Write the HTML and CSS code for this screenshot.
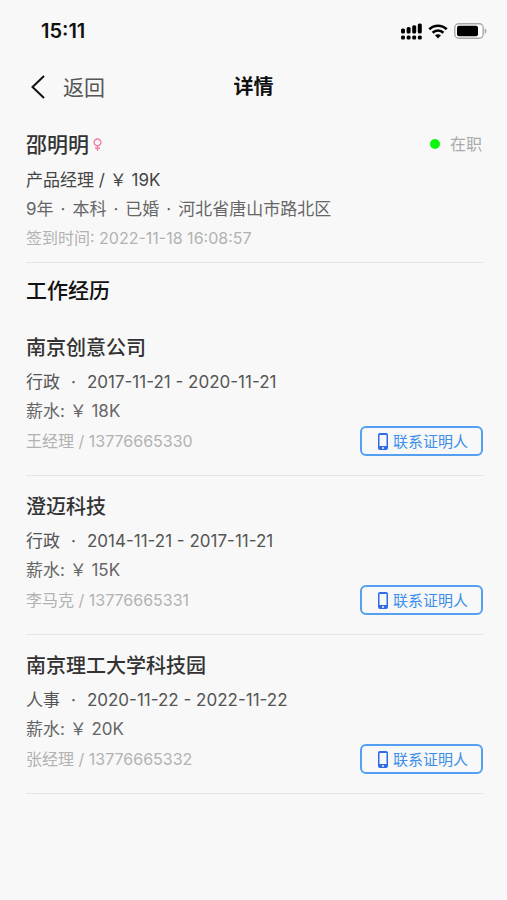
FILE: index.html
```html
<!DOCTYPE html>
<html lang="zh-CN">
<head>
<meta charset="utf-8">
<meta name="viewport" content="width=device-width, initial-scale=1">
<title>详情</title>
<link rel="stylesheet" href="styles.css">
</head>
<body>
<svg class="defs" aria-hidden="true">
  <symbol id="phone" viewBox="0 0 10 17">
    <path fill-rule="evenodd" d="M2 0h6a2 2 0 0 1 2 2v13a2 2 0 0 1-2 2H2a2 2 0 0 1-2-2V2a2 2 0 0 1 2-2zM1.500 2v11h7V2zM5 14a1 1 0 1 0 0 2a1 1 0 1 0 0-2z"/>
  </symbol>
</svg>
<div class="status-bar">
  <span class="clock">15:11</span>
  <div class="indicators">
    <svg width="21" height="17" viewBox="0 0 21 17" aria-hidden="true">
      <g fill="#000">
        <rect x="0" y="5.500" width="4" height="5" rx="1.500"/>
        <rect x="5.600" y="4" width="4" height="6.500" rx="1.500"/>
        <rect x="11.200" y="2.200" width="4" height="8.300" rx="1.500"/>
        <rect x="16.800" y="0.500" width="4" height="10" rx="1.500"/>
        <rect x="0" y="12.500" width="4" height="4" rx="1.500"/>
        <rect x="5.600" y="12.500" width="4" height="4" rx="1.500"/>
        <rect x="11.200" y="12.500" width="4" height="4" rx="1.500"/>
        <rect x="16.800" y="12.500" width="4" height="4" rx="1.500"/>
      </g>
    </svg>
    <svg width="20" height="15" viewBox="0 0 20 15" aria-hidden="true">
      <g fill="none" stroke="#000" stroke-width="2.600">
        <path d="M1.300 5.300C6.200.5 13.800.5 18.700 5.300"/>
        <path d="M4.600 8.700c3.100-3 7.700-3 10.800 0"/>
      </g>
      <path d="M7 11.300c1.800-1.500 4.200-1.500 6 0l-3 3.200z"/>
    </svg>
    <svg width="33" height="16" viewBox="0 0 33 16" aria-hidden="true">
      <rect x="0.800" y="0.800" width="28.400" height="14.400" rx="4" fill="#fff" stroke="#a8a8a8" stroke-width="1.400"/>
      <rect x="3" y="2.800" width="21" height="10.400" rx="2"/>
      <path d="M30.700 5.200c2.300 1.200 2.300 4.400 0 5.600z" fill="#a8a8a8"/>
    </svg>
  </div>
</div>
<header class="nav">
  <button class="back" type="button">
    <svg width="14" height="24" viewBox="0 0 14 24" aria-hidden="true"><path d="M13 1L1.500 12L13 23" fill="none" stroke="#111" stroke-width="2"/></svg>
    返回
  </button>
  <h1 class="title">详情</h1>
</header>
<main class="content">
  <section class="profile">
    <div class="row">
      <h2 class="name">邵明明
        <svg width="9" height="13" viewBox="0 0 9 13" role="img" aria-label="女"><path d="M4.500 1a3.400 3.400 0 1 0 0 6.800a3.400 3.400 0 1 0 0-6.800zM4.500 7.800V13M2 10.300h5" fill="none" stroke="#f080a8" stroke-width="1.400"/></svg>
      </h2>
      <span class="state">在职</span>
    </div>
    <p class="line dark">产品经理 / ￥ 19K</p>
    <p class="line facts"><span>9年</span><span>·</span><span>本科</span><span>·</span><span>已婚</span><span>·</span><span>河北省唐山市路北区</span></p>
    <p class="line light">签到时间: 2022-11-18 16:08:57</p>
  </section>
  <h2 class="section-title">工作经历</h2>
  <article class="job">
    <h3 class="company">南京创意公司</h3>
    <p class="line period"><span>行政</span><span>·</span><span>2017-11-21 - 2020-11-21</span></p>
    <p class="line pay">薪水: ￥ 18K</p>
    <div class="row">
      <span class="light">王经理 / 13776665330</span>
      <button class="contact" type="button"><svg width="10" height="17" aria-hidden="true"><use href="#phone"/></svg>联系证明人</button>
    </div>
  </article>
  <article class="job">
    <h3 class="company">澄迈科技</h3>
    <p class="line period"><span>行政</span><span>·</span><span>2014-11-21 - 2017-11-21</span></p>
    <p class="line pay">薪水: ￥ 15K</p>
    <div class="row">
      <span class="light">李马克 / 13776665331</span>
      <button class="contact" type="button"><svg width="10" height="17" aria-hidden="true"><use href="#phone"/></svg>联系证明人</button>
    </div>
  </article>
  <article class="job">
    <h3 class="company">南京理工大学科技园</h3>
    <p class="line period"><span>人事</span><span>·</span><span>2020-11-22 - 2022-11-22</span></p>
    <p class="line pay">薪水: ￥ 20K</p>
    <div class="row">
      <span class="light">张经理 / 13776665332</span>
      <button class="contact" type="button"><svg width="10" height="17" aria-hidden="true"><use href="#phone"/></svg>联系证明人</button>
    </div>
  </article>
</main>
</body>
</html>
```
FILE: styles.css
```css
* {
  box-sizing: border-box;
}

body {
  margin: 0;
  min-height: 100vh;
  background: #f8f8f8;
  color: #555;
  font: 17px/29px Inter, "Noto Sans CJK SC", sans-serif;
}

h1, h2, h3, p {
  margin: 0;
}

button {
  font: inherit;
  cursor: pointer;
}

.defs {
  position: absolute;
  width: 0;
  height: 0;
}

.status-bar {
  display: flex;
  align-items: center;
  justify-content: space-between;
  height: 62px;
  padding: 0 20px 0 41px;
}

.clock {
  color: #111;
  font-size: 20px;
  font-weight: 600;
}

.indicators {
  display: flex;
  align-items: center;
  gap: 6px;
}

.nav {
  display: grid;
  grid-template-columns: 1fr auto 1fr;
  align-items: center;
  height: 50px;
  padding: 0 31px;
}

.back {
  display: flex;
  align-items: center;
  justify-self: start;
  gap: 18px;
  padding: 0;
  border: 0;
  background: none;
  color: #555;
  font-size: 21px;
}

.title {
  color: #111;
  font-size: 20px;
  font-weight: 700;
}

.content {
  padding: 17px 24px 0 26px;
}

.row {
  display: flex;
  align-items: center;
  justify-content: space-between;
  height: 30px;
}

.profile {
  padding-bottom: 9px;
  border-bottom: 1px solid #e6e6e6;
}

.profile .row {
  margin-bottom: 7px;
}

.name {
  display: flex;
  align-items: center;
  gap: 4px;
  color: #333;
  font-size: 21px;
  font-weight: 500;
}

.state {
  display: flex;
  align-items: center;
  gap: 10px;
  padding-right: 1px;
  color: #aaa;
  font-size: 16px;
}

.state::before {
  content: "";
  width: 10px;
  height: 10px;
  border-radius: 50%;
  background: #0bf70b;
}

.dark {
  color: #444;
}

.light {
  color: #b2b2b2;
  font-size: 16px;
}

.section-title {
  margin: 13px 0 11px;
  color: #111;
  font-size: 21px;
  font-weight: 500;
  line-height: 30px;
}

.job {
  padding: 16px 0 19px;
  border-bottom: 1px solid #e6e6e6;
}

.company {
  margin-bottom: 5px;
  color: #333;
  font-size: 20px;
  font-weight: 500;
  line-height: 30px;
}

.facts {
  display: flex;
  gap: 7px;
  color: #666;
}

.period {
  display: flex;
  gap: 11px;
}

.pay {
  color: #666;
}

.contact {
  display: flex;
  align-items: center;
  justify-content: center;
  gap: 5px;
  width: 123px;
  height: 30px;
  padding: 0 0 0 3px;
  border: 2px solid #559ff0;
  border-radius: 6px;
  background: none;
  color: #3b8eea;
  font-size: 15px;
}

.contact svg {
  fill: #2f6be8;
}
```
